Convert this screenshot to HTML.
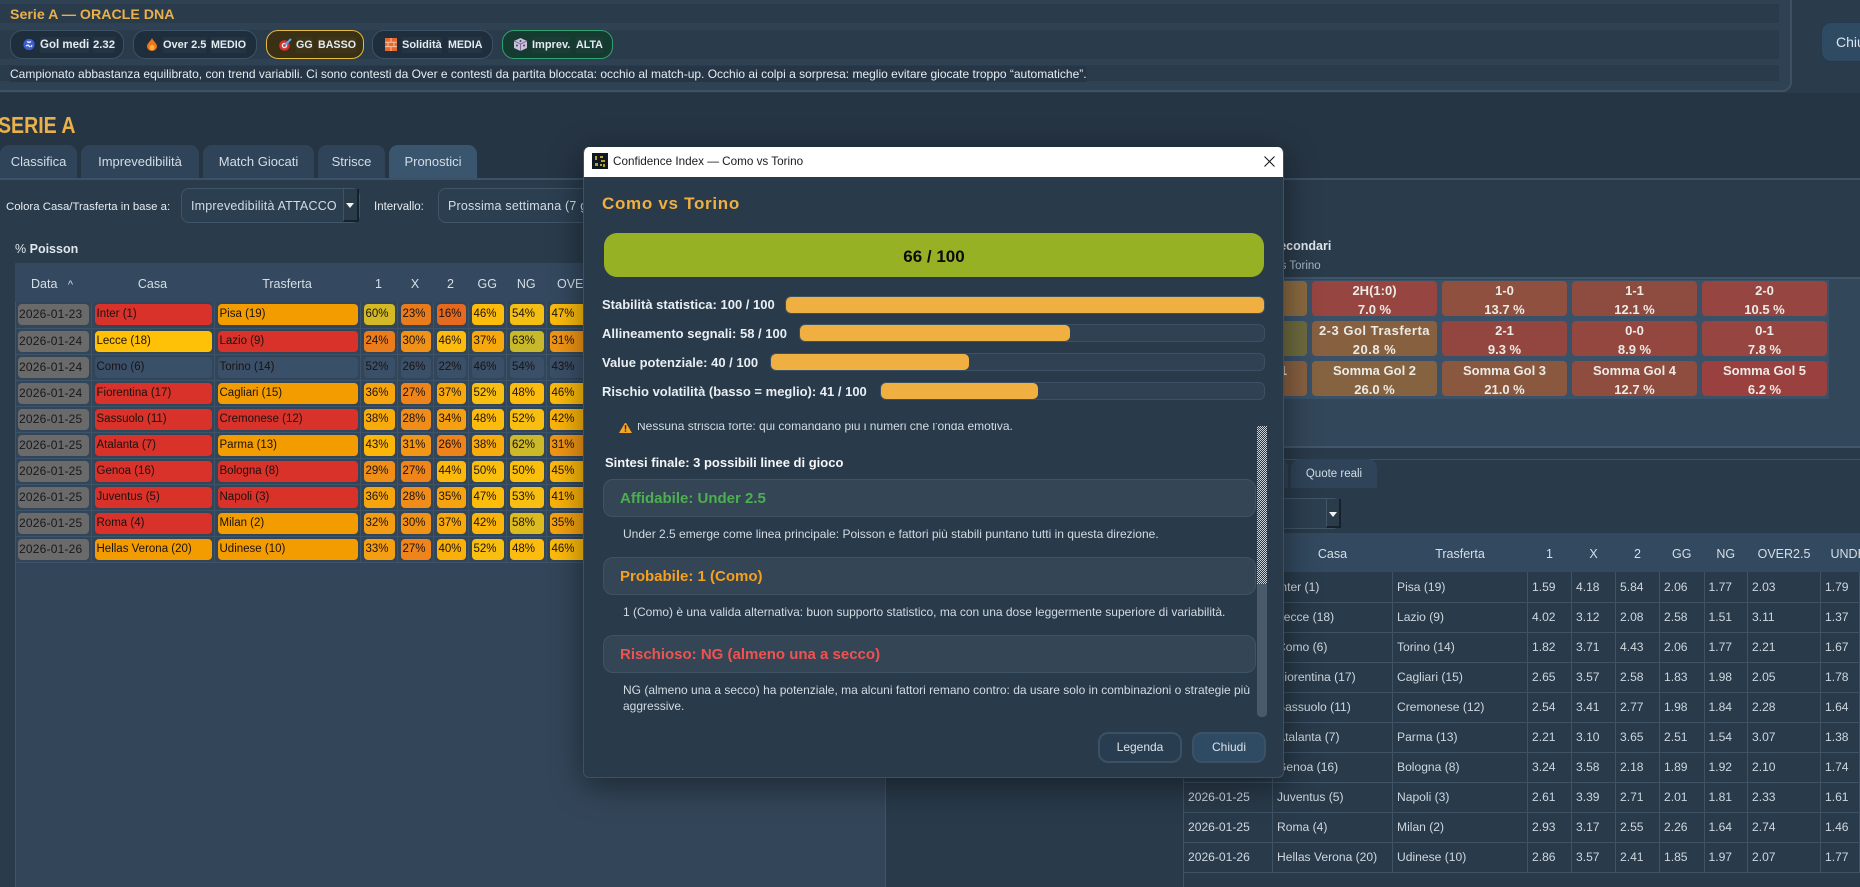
<!DOCTYPE html>
<html lang="it"><head><meta charset="utf-8"><title>Serie A</title>
<style>
*{box-sizing:border-box}
html,body{margin:0;padding:0}
body{width:1860px;height:887px;overflow:hidden;position:relative;background:#2a3b4b;font-family:"Liberation Sans",sans-serif;font-size:12px;color:#dfe6ec}
.a{position:absolute}
.t{position:absolute;white-space:nowrap;line-height:16px}
.b{font-weight:700}
.band{position:absolute;left:0;width:1779px;background:#2a3b4c}
.chip{position:absolute;top:30px;height:29px;border-radius:12px;border:1px solid #3d5264;background:#1f2e3c}
.ct{position:absolute;top:37px;line-height:16px;font-size:11.5px;font-weight:700;color:#e4ebf1;white-space:nowrap;background:#243443}
.v{font-size:10.7px}
.ic{position:absolute;top:38px}
.tab{position:absolute;top:145px;height:33px;background:#2f4459;border-radius:9px 9px 0 0;text-align:center;line-height:34px;font-size:13px;color:#d3dde6}
.combo{position:absolute;top:188px;height:35px;background:#2c3f51;border:1px solid #405567;border-radius:8px;line-height:34px;color:#d3dde6;font-size:12.5px;letter-spacing:.2px}
table{border-collapse:collapse;table-layout:fixed;position:absolute}
#lt th,#rt th{font-weight:400;font-size:12.5px;color:#d6dfe7;padding:2px 0 0;text-align:center}
#lt{left:15px;top:263px;width:870px}
#lt tr.hr{height:39px;background:#34495f}
#lt td{padding:2px 0 2px;border:1px solid #3d5468;border-left:0;border-top:0;height:26px;font-size:11.5px;color:#1c1210;line-height:21px}
#lt td div{margin:0 2px 0 3px;height:21px;border-radius:4px;padding-left:2px;white-space:nowrap;overflow:hidden}
#lt td.d div{background:#6a6a6a;font-size:12px;color:#17191b;padding-left:1px;letter-spacing:.2px}
.R{background:#d8322a}.O{background:#f39c00}.Y{background:#ffc107}.S{background:#3a5068!important}
#rt{left:1183px;top:533px;width:677px}
#rt tr.hr{height:39px;background:#32495f}
#rt td{height:30px;padding:0 0 0 4px;border:1px solid #3f5365;border-top:0;border-left:0;font-size:12.1px;color:#ced7df;white-space:nowrap;overflow:hidden}
#rt td:first-child{border-left:1px solid #3f5365}
.lbl{position:absolute;color:#e9eef3;font-weight:700;font-size:13px;line-height:16px;white-space:nowrap}
.track{position:absolute;height:18px;background:#2f4152;border:1px solid #3d5164;border-radius:6px}
.fill{position:absolute;left:0;top:0;bottom:0;background:#f0b041;border-radius:5px}
.card{position:absolute;left:19px;width:653px;height:38px;background:#344555;border:1px solid #3f5366;border-radius:10px;padding-left:16px;font-size:15px;font-weight:700;line-height:37px}
.p{position:absolute;left:39px;font-size:12px;line-height:16px;color:#d3dbe2;white-space:nowrap}
.btn{position:absolute;top:585px;height:31px;border:2px solid #3a5166;border-radius:10px;background:#293d50;color:#dbe3ea;text-align:center;line-height:27px;font-size:12px}
.hc{position:absolute;width:125px;height:35px;border-radius:4px;text-align:center;color:#ecebe6;font-weight:700;font-size:13px;line-height:19px;white-space:nowrap;overflow:hidden}
</style></head><body>

<!-- top oracle panel -->
<div class="a" style="left:-10px;top:-10px;width:1802px;height:102px;background:#2f4254;border:2px solid #3d5163;border-radius:10px"></div>
<div class="band" style="top:4px;height:19px"></div>
<div class="band" style="top:30px;height:29px"></div>
<div class="band" style="top:65px;height:16px"></div>
<div class="t b" style="left:10px;top:7px;font-size:14.2px;color:#eab04a">Serie A — ORACLE DNA</div>

<div class="chip" style="left:10px;width:114px"></div>
<div class="chip" style="left:133px;width:124px"></div>
<div class="chip" style="left:266px;width:98px;background:#3a3014;border:1px solid #e6bb3e"></div>
<div class="chip" style="left:372px;width:121px"></div>
<div class="chip" style="left:502px;width:111px;background:#153a30;border:1px solid #2ea36f"></div>

<svg class="ic" style="left:23px" width="12" height="13" viewBox="0 0 12 13"><circle cx="6" cy="6.5" r="5.6" fill="#3a5fd0"/><path d="M4 3.5l2 1 2-1M3 8l2-1 2 2M8 9l1-2" stroke="#e6ecff" stroke-width="1.3" fill="none"/></svg>
<div class="ct" style="left:40px">Gol medi</div><div class="ct v" style="left:93px;font-size:11.3px">2.32</div>
<svg class="ic" style="left:147px" width="10" height="13" viewBox="0 0 10 13"><path d="M5 0C6 3 10 5 10 8.5A5 4.5 0 0 1 0 8.5C0 5 4 3 5 0z" fill="#f0761c"/><ellipse cx="5" cy="9.5" rx="2.4" ry="2.6" fill="#f7b23c"/></svg>
<div class="ct" style="left:163px;font-size:11px">Over 2.5</div><div class="ct v" style="left:211px">MEDIO</div>
<svg class="ic" style="left:279px" width="13" height="13" viewBox="0 0 13 13"><circle cx="5.5" cy="7.5" r="5.3" fill="#d9312f"/><circle cx="5.5" cy="7.5" r="2.8" fill="#f3e6e6"/><circle cx="5.5" cy="7.5" r="1.4" fill="#d9312f"/><path d="M6 7L12 1" stroke="#5aa6e8" stroke-width="2"/></svg>
<div class="ct v" style="left:296px;background:#3f3518">GG</div><div class="ct v" style="left:318px;background:#3f3518">BASSO</div>
<svg class="ic" style="left:385px" width="12" height="13" viewBox="0 0 12 13"><rect width="12" height="13" fill="#e8682c"/><path d="M0 4.2h12M0 8.6h12M6 0v4.2M3 4.2v4.4M9 4.2v4.4M6 8.6V13" stroke="#f3c3a4" stroke-width="1"/></svg>
<div class="ct" style="left:402px;font-size:11px">Solidità</div><div class="ct v" style="left:448px">MEDIA</div>
<svg class="ic" style="left:514px" width="13" height="13" viewBox="0 0 13 13"><path d="M6.5 0L13 3v7l-6.5 3L0 10V3z" fill="#c9bfd8"/><path d="M0 3l6.5 3L13 3M6.5 6v7" stroke="#7a6f96" stroke-width="1" fill="none"/><circle cx="3" cy="7.5" r="1" fill="#523a6e"/><circle cx="10" cy="7.5" r="1" fill="#523a6e"/><circle cx="6.5" cy="3" r="1" fill="#523a6e"/></svg>
<div class="ct" style="left:532px;background:#1a3d35;font-size:11px">Imprev.</div><div class="ct v" style="left:576px;background:#1a3d35">ALTA</div>

<div class="t" style="left:10px;top:66px;font-size:12px;color:#e6ecf1;background:#263646">Campionato abbastanza equilibrato, con trend variabili. Ci sono contesti da Over e contesti da partita bloccata: occhio al match-up. Occhio ai colpi a sorpresa: meglio evitare giocate troppo “automatiche”.</div>

<!-- close top right -->
<div class="a" style="left:1821px;top:22px;width:70px;height:40px;background:#2f4a63;border:1px solid #243a50;border-radius:10px;color:#dbe5ee;font-size:14px;line-height:38px;padding-left:14px">Chiudi</div>

<div class="a" style="left:0;top:93px;width:1860px;height:85px;background:#263544"></div>
<div class="t b" style="left:-2px;top:112px;font-size:23px;line-height:26px;color:#eab04a;transform:scaleX(.85);transform-origin:0 0">SERIE A</div>

<div class="tab" style="left:0;width:77px">Classifica</div>
<div class="tab" style="left:81px;width:118px">Imprevedibilità</div>
<div class="tab" style="left:203px;width:111px">Match Giocati</div>
<div class="tab" style="left:318px;width:67px">Strisce</div>
<div class="tab" style="left:389px;width:88px;background:#3a556e">Pronostici</div>

<!-- main notebook pane -->
<div class="a" style="left:0;top:178px;width:1860px;height:709px;background:#2a3b4b;border-top:2px solid #3d5266"></div>

<div class="t" style="left:6px;top:199px;font-size:11.4px;color:#e6ecf1">Colora Casa/Trasferta in base a:</div>
<div class="combo" style="left:181px;width:179px;padding-left:9px">Imprevedibilità ATTACCO</div>
<div class="a" style="left:343px;top:189px;width:16px;height:33px;background:#2a3b4a;border-right:2px solid #17212b;border-bottom:2px solid #17212b;border-left:1px solid #3f5466"></div>
<div class="a" style="left:346px;top:203px;width:0;height:0;border:4px solid transparent;border-top:5px solid #f2f4f6"></div>
<div class="t" style="left:374px;top:199px;font-size:11.5px;color:#e6ecf1">Intervallo:</div>
<div class="combo" style="left:438px;width:260px;padding-left:9px">Prossima settimana (7 giorni)</div>

<div class="t" style="left:15px;top:241px;font-size:12.5px;color:#dfe6ec"><span>%</span> <span class="b">Poisson</span></div>

<!-- left table panel -->
<div class="a" style="left:15px;top:263px;width:871px;height:624px;background:#334659;border:1px solid #3f5568;border-bottom:0;border-radius:7px 7px 0 0"></div>
<table id="lt">
<colgroup><col style="width:76px"><col style="width:123px"><col style="width:146px"><col style="width:37px"><col style="width:36px"><col style="width:35px"><col style="width:38.5px"><col style="width:39.5px"><col></colgroup>
<tr class="hr"><th style="text-align:left;padding-left:16px">Data &nbsp;&nbsp;<span style="font-size:11px">^</span></th><th>Casa</th><th>Trasferta</th><th>1</th><th>X</th><th>2</th><th>GG</th><th>NG</th><th style="text-align:left;padding-left:11px">OVER2.5</th></tr>
<tr><td class="d"><div>2026-01-23</div></td><td><div class="R">Inter (1)</div></td><td><div class="O">Pisa (19)</div></td><td><div style="background:#d2b925">60%</div></td><td><div style="background:#e87b1c">23%</div></td><td><div style="background:#e5691f">16%</div></td><td><div style="background:#fdbb0b">46%</div></td><td><div style="background:#f3bf14">54%</div></td><td><div style="background:#fcbc0c">47%</div></td></tr>
<tr><td class="d"><div>2026-01-24</div></td><td><div class="Y">Lecce (18)</div></td><td><div class="R">Lazio (9)</div></td><td><div style="background:#ea7c1b">24%</div></td><td><div style="background:#f09217">30%</div></td><td><div style="background:#fdbb0b">46%</div></td><td><div style="background:#f6a80d">37%</div></td><td><div style="background:#c8b92c">63%</div></td><td><div style="background:#f19616">31%</div></td></tr>
<tr><td class="d"><div>2026-01-24</div></td><td><div class="S">Como (6)</div></td><td><div class="S">Torino (14)</div></td><td><div class="S">52%</div></td><td><div class="S">26%</div></td><td><div class="S">22%</div></td><td><div class="S">46%</div></td><td><div class="S">54%</div></td><td><div class="S">43%</div></td></tr>
<tr><td class="d"><div>2026-01-24</div></td><td><div class="R">Fiorentina (17)</div></td><td><div class="O">Cagliari (15)</div></td><td><div style="background:#f6a50e">36%</div></td><td><div style="background:#ee841a">27%</div></td><td><div style="background:#f6a80d">37%</div></td><td><div style="background:#f8bf10">52%</div></td><td><div style="background:#fcbc0d">48%</div></td><td><div style="background:#fdbb0b">46%</div></td></tr>
<tr><td class="d"><div>2026-01-25</div></td><td><div class="R">Sassuolo (11)</div></td><td><div class="R">Cremonese (12)</div></td><td><div style="background:#f8ab0c">38%</div></td><td><div style="background:#ef8c1a">28%</div></td><td><div style="background:#f4a011">34%</div></td><td><div style="background:#fcbc0d">48%</div></td><td><div style="background:#f8bf10">52%</div></td><td><div style="background:#fbb40a">42%</div></td></tr>
<tr><td class="d"><div>2026-01-25</div></td><td><div class="R">Atalanta (7)</div></td><td><div class="O">Parma (13)</div></td><td><div style="background:#fcb60a">43%</div></td><td><div style="background:#f19616">31%</div></td><td><div style="background:#ee831b">26%</div></td><td><div style="background:#f8ab0c">38%</div></td><td><div style="background:#ccb92a">62%</div></td><td><div style="background:#f19616">31%</div></td></tr>
<tr><td class="d"><div>2026-01-25</div></td><td><div class="R">Genoa (16)</div></td><td><div class="R">Bologna (8)</div></td><td><div style="background:#ef8f18">29%</div></td><td><div style="background:#ee841a">27%</div></td><td><div style="background:#fdb90a">44%</div></td><td><div style="background:#fabf0d">50%</div></td><td><div style="background:#fabf0d">50%</div></td><td><div style="background:#fdb90b">45%</div></td></tr>
<tr><td class="d"><div>2026-01-25</div></td><td><div class="R">Juventus (5)</div></td><td><div class="R">Napoli (3)</div></td><td><div style="background:#f6a50e">36%</div></td><td><div style="background:#ef8c1a">28%</div></td><td><div style="background:#f5a30f">35%</div></td><td><div style="background:#fcbc0c">47%</div></td><td><div style="background:#f6bf12">53%</div></td><td><div style="background:#fab20a">41%</div></td></tr>
<tr><td class="d"><div>2026-01-25</div></td><td><div class="R">Roma (4)</div></td><td><div class="O">Milan (2)</div></td><td><div style="background:#f39c14">32%</div></td><td><div style="background:#f09217">30%</div></td><td><div style="background:#f6a80d">37%</div></td><td><div style="background:#fbb40a">42%</div></td><td><div style="background:#dcbb20">58%</div></td><td><div style="background:#f5a30f">35%</div></td></tr>
<tr><td class="d"><div>2026-01-26</div></td><td><div class="O">Hellas Verona (20)</div></td><td><div class="O">Udinese (10)</div></td><td><div style="background:#f49e12">33%</div></td><td><div style="background:#ee841a">27%</div></td><td><div style="background:#f9b00a">40%</div></td><td><div style="background:#f8bf10">52%</div></td><td><div style="background:#fcbc0d">48%</div></td><td><div style="background:#fdbb0b">46%</div></td></tr>
</table>

<!-- right upper panel -->
<div class="a" style="left:886px;top:277px;width:974px;height:169px;background:#33475a;border-top:2px solid #3f5568"></div>
<div class="t b" style="left:1225px;top:238px;font-size:12.5px;color:#dfe6ec">Mercati secondari</div>
<div class="t" style="left:1241px;top:258px;font-size:11.5px;color:#a9b6c2">Como vs Torino</div>
<div class="a" style="left:886px;top:280px;width:943px;height:119px;background:#3a5168"></div>

<div class="hc" style="left:1187px;top:281px;width:120px;background:#8a6a40"></div>
<div class="hc" style="left:1187px;top:321px;width:120px;background:#6e6b3f"></div>
<div class="hc" style="left:1187px;top:361px;width:120px;background:#876040;text-align:right;padding-right:20px">Somma Gol 1</div>
<div class="hc" style="left:1312px;top:281px;background:#964540">2H(1:0)<br>7.0 %</div>
<div class="hc" style="left:1442px;top:281px;background:#8f5040">1-0<br>13.7 %</div>
<div class="hc" style="left:1572px;top:281px;background:#8e4b40">1-1<br>12.1 %</div>
<div class="hc" style="left:1702px;top:281px;background:#964540">2-0<br>10.5 %</div>
<div class="hc" style="left:1312px;top:321px;background:#876040;letter-spacing:.5px">2-3 Gol Trasferta<br>20.8 %</div>
<div class="hc" style="left:1442px;top:321px;background:#93463f">2-1<br>9.3 %</div>
<div class="hc" style="left:1572px;top:321px;background:#93473f">0-0<br>8.9 %</div>
<div class="hc" style="left:1702px;top:321px;background:#964540">0-1<br>7.8 %</div>
<div class="hc" style="left:1312px;top:361px;background:#866340">Somma Gol 2<br>26.0 %</div>
<div class="hc" style="left:1442px;top:361px;background:#89583f">Somma Gol 3<br>21.0 %</div>
<div class="hc" style="left:1572px;top:361px;background:#8f4d3f">Somma Gol 4<br>12.7 %</div>
<div class="hc" style="left:1702px;top:361px;background:#9a4140">Somma Gol 5<br>6.2 %</div>

<!-- strip + lower right -->
<div class="a" style="left:886px;top:446px;width:974px;height:441px;background:#293a4a;border-top:2px solid #40566a"></div>
<div class="a" style="left:1183px;top:459px;width:677px;height:1px;background:#3f5365"></div>
<div class="tab" style="left:1200px;top:459px;width:88px;height:29px;line-height:29px;font-size:11.5px;background:#2f4459"></div>
<div class="tab" style="left:1291px;top:459px;width:86px;height:29px;line-height:31px;font-size:11.5px;background:#2f4459">Quote reali</div>
<div class="combo" style="left:1190px;top:498px;width:151px;height:31px"></div>
<div class="a" style="left:1326px;top:499px;width:15px;height:29px;background:#2a3b4a;border-right:2px solid #17212b;border-bottom:2px solid #17212b;border-left:1px solid #3f5466"></div>
<div class="a" style="left:1329px;top:512px;width:0;height:0;border:4px solid transparent;border-top:5px solid #f2f4f6"></div>
<div class="a" style="left:1183px;top:488px;width:1px;height:399px;background:#3f5365"></div>

<table id="rt">
<colgroup><col style="width:89px"><col style="width:120px"><col style="width:135px"><col style="width:44px"><col style="width:44px"><col style="width:44px"><col style="width:44.5px"><col style="width:43.5px"><col style="width:73px"><col></colgroup>
<tr class="hr"><th>Data</th><th>Casa</th><th>Trasferta</th><th>1</th><th>X</th><th>2</th><th>GG</th><th>NG</th><th>OVER2.5</th><th style="text-align:left;padding-left:10px">UNDER</th></tr>
<tr><td>2026-01-23</td><td>Inter (1)</td><td>Pisa (19)</td><td>1.59</td><td>4.18</td><td>5.84</td><td>2.06</td><td>1.77</td><td>2.03</td><td>1.79</td></tr>
<tr><td>2026-01-24</td><td>Lecce (18)</td><td>Lazio (9)</td><td>4.02</td><td>3.12</td><td>2.08</td><td>2.58</td><td>1.51</td><td>3.11</td><td>1.37</td></tr>
<tr><td>2026-01-24</td><td>Como (6)</td><td>Torino (14)</td><td>1.82</td><td>3.71</td><td>4.43</td><td>2.06</td><td>1.77</td><td>2.21</td><td>1.67</td></tr>
<tr><td>2026-01-24</td><td>Fiorentina (17)</td><td>Cagliari (15)</td><td>2.65</td><td>3.57</td><td>2.58</td><td>1.83</td><td>1.98</td><td>2.05</td><td>1.78</td></tr>
<tr><td>2026-01-25</td><td>Sassuolo (11)</td><td>Cremonese (12)</td><td>2.54</td><td>3.41</td><td>2.77</td><td>1.98</td><td>1.84</td><td>2.28</td><td>1.64</td></tr>
<tr><td>2026-01-25</td><td>Atalanta (7)</td><td>Parma (13)</td><td>2.21</td><td>3.10</td><td>3.65</td><td>2.51</td><td>1.54</td><td>3.07</td><td>1.38</td></tr>
<tr><td>2026-01-25</td><td>Genoa (16)</td><td>Bologna (8)</td><td>3.24</td><td>3.58</td><td>2.18</td><td>1.89</td><td>1.92</td><td>2.10</td><td>1.74</td></tr>
<tr><td>2026-01-25</td><td>Juventus (5)</td><td>Napoli (3)</td><td>2.61</td><td>3.39</td><td>2.71</td><td>2.01</td><td>1.81</td><td>2.33</td><td>1.61</td></tr>
<tr><td>2026-01-25</td><td>Roma (4)</td><td>Milan (2)</td><td>2.93</td><td>3.17</td><td>2.55</td><td>2.26</td><td>1.64</td><td>2.74</td><td>1.46</td></tr>
<tr><td>2026-01-26</td><td>Hellas Verona (20)</td><td>Udinese (10)</td><td>2.86</td><td>3.57</td><td>2.41</td><td>1.85</td><td>1.97</td><td>2.07</td><td>1.77</td></tr>
</table>

<!-- dialog -->
<div class="a" style="left:583px;top:147px;width:701px;height:631px;background:#293a4a;border:1px solid #3d5163;border-top:0;border-radius:6px;box-shadow:0 8px 34px rgba(0,0,0,.45);overflow:hidden">
  <div class="a" style="left:0;top:0;width:701px;height:30px;background:#fff"></div>
  <svg class="a" style="left:8px;top:6px" width="16" height="16" viewBox="0 0 16 16"><rect width="16" height="16" fill="#0d1a20"/><path d="M3 3h2v4H3zM8 3h3v2H8zM9 7h4v2H9zM3 10h3v3H3zM8 11h2v2H8zM11 11h2v3h-2z" fill="#c29a34"/></svg>
  <div class="t" style="left:29px;top:7px;font-size:11.7px;color:#1b1b1b">Confidence Index — Como vs Torino</div>
  <svg class="a" style="left:680px;top:9px" width="11" height="11" viewBox="0 0 11 11"><path d="M.5.5l10 10M10.5.5l-10 10" stroke="#111" stroke-width="1"/></svg>

  <div class="t b" style="left:18px;top:47px;font-size:17px;line-height:20px;color:#f0b041;letter-spacing:.7px">Como vs Torino</div>
  <div class="a" style="left:20px;top:86px;width:660px;height:44px;background:#97b125;border-radius:13px;text-align:center;font-weight:700;font-size:17px;line-height:48px;color:#0b0b0b">66 / 100</div>

  <div class="lbl" style="left:18px;top:150px">Stabilità statistica: 100 / 100</div>
  <div class="track" style="left:201px;right:18px;top:149px"><div class="fill" style="width:100%"></div></div>
  <div class="lbl" style="left:18px;top:179px">Allineamento segnali: 58 / 100</div>
  <div class="track" style="left:215px;right:18px;top:177px"><div class="fill" style="width:270px"></div></div>
  <div class="lbl" style="left:18px;top:208px">Value potenziale: 40 / 100</div>
  <div class="track" style="left:186px;right:18px;top:206px"><div class="fill" style="width:198px"></div></div>
  <div class="lbl" style="left:18px;top:237px">Rischio volatilità (basso = meglio): 41 / 100</div>
  <div class="track" style="left:296px;right:18px;top:235px"><div class="fill" style="width:157px"></div></div>

  <!-- scroll area -->
  <div class="a" style="left:0;top:276px;width:701px;height:295px;overflow:hidden">
    <svg class="a" style="left:35px;top:-1px" width="13" height="11" viewBox="0 0 13 11"><path d="M6.5 0L13 11H0z" fill="#f5a623"/><rect x="5.8" y="3" width="1.4" height="4.5" fill="#3a2a10"/><rect x="5.8" y="8.3" width="1.4" height="1.4" fill="#3a2a10"/></svg>
    <div class="t" style="left:53px;top:-5px;font-size:12px;color:#d3dbe2">Nessuna striscia forte: qui comandano più i numeri che l'onda emotiva.</div>
    <div class="t b" style="left:21px;top:32px;font-size:13px;color:#f3f6f8">Sintesi finale: 3 possibili linee di gioco</div>
    <div class="card" style="top:56px;color:#4caf50">Affidabile: Under 2.5</div>
    <div class="p" style="top:103px">Under 2.5 emerge come linea principale: Poisson e fattori più stabili puntano tutti in questa direzione.</div>
    <div class="card" style="top:134px;color:#f5a01e">Probabile: 1 (Como)</div>
    <div class="p" style="top:181px">1 (Como) è una valida alternativa: buon supporto statistico, ma con una dose leggermente superiore di variabilità.</div>
    <div class="card" style="top:212px;color:#ef5350">Rischioso: NG (almeno una a secco)</div>
    <div class="p" style="top:259px">NG (almeno una a secco) ha potenziale, ma alcuni fattori remano contro: da usare solo in combinazioni o strategie più<br>aggressive.</div>
    <div class="a" style="left:673px;top:3px;width:10px;height:158px;background:repeating-conic-gradient(#c8d0d8 0 25%,#2a3a4a 0 50%) 0 0/2px 2px"></div>
    <div class="a" style="left:673px;top:161px;width:10px;height:133px;background:#4a5a6a;border-radius:0 0 4px 4px"></div>
  </div>

  <div class="btn" style="left:514px;width:84px">Legenda</div>
  <div class="btn" style="left:608px;width:74px;background:#2f4a63">Chiudi</div>
</div>
</body></html>
